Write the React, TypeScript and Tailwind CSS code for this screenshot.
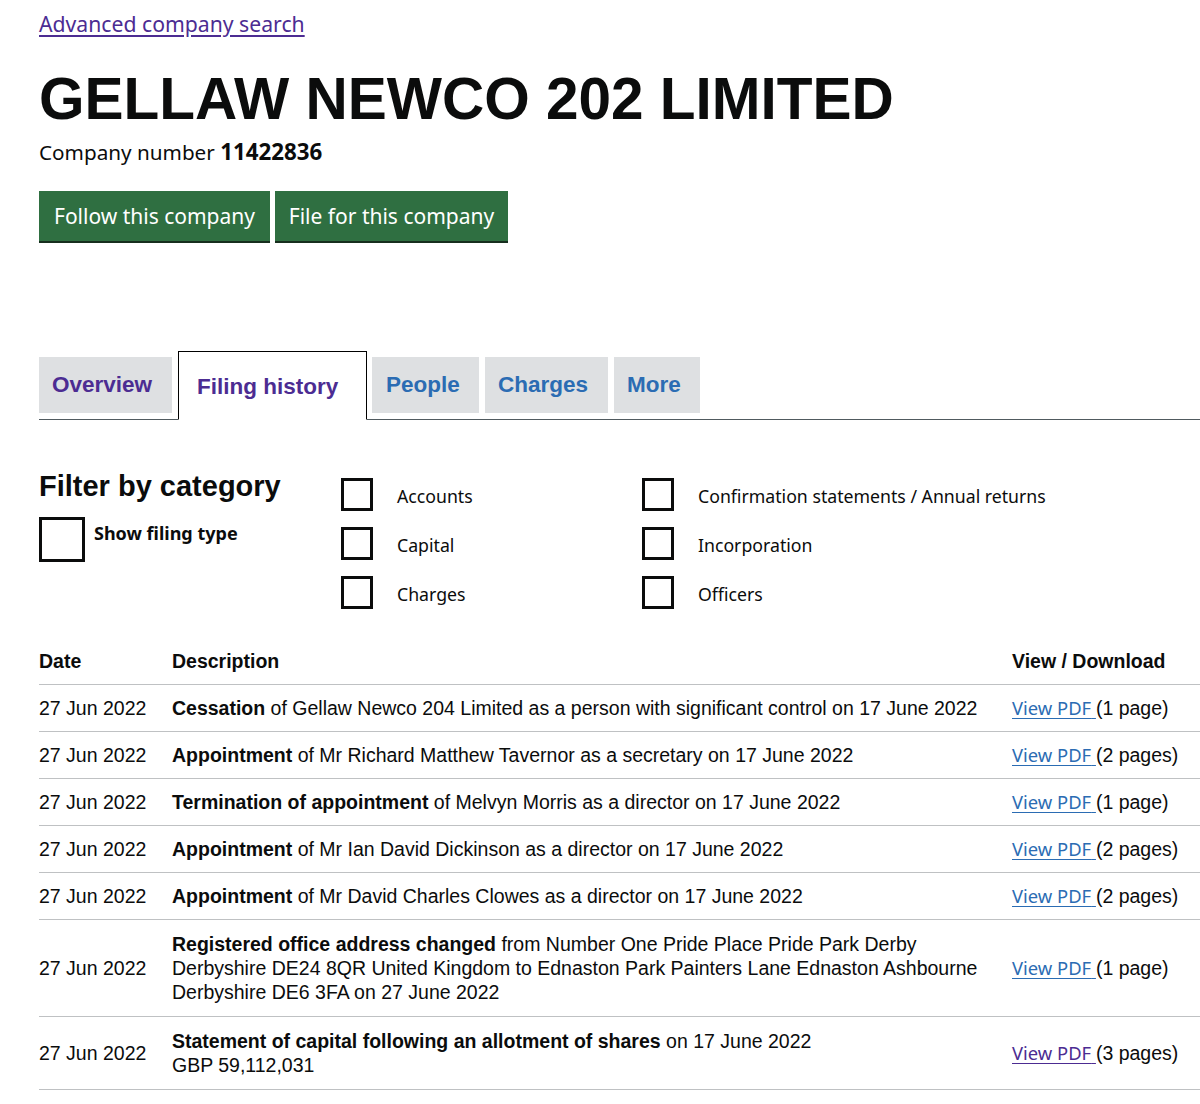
import React from "react";

const T = { fontFamily: '"Noto Sans", "Liberation Sans", sans-serif' };
const A = { fontFamily: '"Liberation Sans", Arial, sans-serif' };

type Row = {
  desc: React.ReactNode;
  pages: string;
  visited?: boolean;
};

const rows: Row[] = [
  {
    desc: (
      <>
        <b>Cessation</b> of Gellaw Newco 204 Limited as a person with significant control on 17 June 2022
      </>
    ),
    pages: "(1 page)",
  },
  {
    desc: (
      <>
        <b>Appointment</b> of Mr Richard Matthew Tavernor as a secretary on 17 June 2022
      </>
    ),
    pages: "(2 pages)",
  },
  {
    desc: (
      <>
        <b>Termination of appointment</b> of Melvyn Morris as a director on 17 June 2022
      </>
    ),
    pages: "(1 page)",
  },
  {
    desc: (
      <>
        <b>Appointment</b> of Mr Ian David Dickinson as a director on 17 June 2022
      </>
    ),
    pages: "(2 pages)",
  },
  {
    desc: (
      <>
        <b>Appointment</b> of Mr David Charles Clowes as a director on 17 June 2022
      </>
    ),
    pages: "(2 pages)",
  },
  {
    desc: (
      <>
        <b>Registered office address changed</b> from Number One Pride Place Pride Park Derby
        <br />
        Derbyshire DE24 8QR United Kingdom to Ednaston Park Painters Lane Ednaston Ashbourne
        <br />
        Derbyshire DE6 3FA on 27 June 2022
      </>
    ),
    pages: "(1 page)",
  },
  {
    desc: (
      <>
        <b>Statement of capital following an allotment of shares</b> on 17 June 2022
        <br />
        GBP 59,112,031
      </>
    ),
    pages: "(3 pages)",
    visited: true,
  },
];

function Box({ big }: { big?: boolean }) {
  return big ? (
    <div className="w-[46px] h-[45px] border-[3px] border-[#0b0c0c] bg-white shrink-0" />
  ) : (
    <div className="w-[32px] h-[33px] border-[3px] border-[#0b0c0c] bg-white shrink-0" />
  );
}

function Check({ label }: { label: string }) {
  return (
    <div className="flex items-center h-[33px]">
      <Box />
      <span className="ml-[24px] text-[17.7px] leading-[24px] text-[#0b0c0c] pt-[3px]" style={T}>
        {label}
      </span>
    </div>
  );
}

export default function App() {
  return (
    <div className="w-[1200px] h-[1104px] overflow-hidden bg-white text-[#0b0c0c] pl-[39px]">
      <div className="pt-[9px]">
        <a href="#" className="text-[21.2px] leading-[30px] text-[#4c2c92] underline underline-offset-[3px]" style={T}>
          Advanced company search
        </a>
      </div>

      <h1 className="mt-[31px] text-[58.5px] leading-[58px] font-bold" style={A}>
        GELLAW NEWCO 202 LIMITED
      </h1>

      <p className="mt-[10px] text-[20.7px] leading-[28px]" style={T}>
        Company number <b className="font-bold text-[22.3px]">11422836</b>
      </p>

      <div className="mt-[25px] flex gap-[5px]">
        <button
          className="w-[231px] h-[50px] bg-[#2f6f41] text-white text-[21px] leading-[24px] shadow-[0_2px_0_#172e1e]"
          style={T}
        >
          Follow this company
        </button>
        <button
          className="w-[233px] h-[50px] bg-[#2f6f41] text-white text-[21px] leading-[24px] shadow-[0_2px_0_#172e1e]"
          style={T}
        >
          File for this company
        </button>
      </div>

      <div className="mt-[110px] flex items-end border-b border-[#505a5f]" style={A}>
        <div className="w-[133px] h-[56px] mb-[6px] bg-[#dee0e2] flex items-center pl-[13px] text-[22.5px] font-bold text-[#4c2c92]">
          Overview
        </div>
        <div className="ml-[6px] w-[189px] h-[69px] -mb-px bg-white border border-black border-b-white flex items-center pl-[18px] pt-[2px] text-[22.5px] font-bold text-[#4c2c92]">
          Filing history
        </div>
        <div className="ml-[5px] w-[107px] h-[56px] mb-[6px] bg-[#dee0e2] flex items-center pl-[14px] text-[22.5px] font-bold text-[#2b6cb3]">
          People
        </div>
        <div className="ml-[6px] w-[123px] h-[56px] mb-[6px] bg-[#dee0e2] flex items-center pl-[13px] text-[22.5px] font-bold text-[#2b6cb3]">
          Charges
        </div>
        <div className="ml-[6px] w-[86px] h-[56px] mb-[6px] bg-[#dee0e2] flex items-center pl-[13px] text-[22.5px] font-bold text-[#2b6cb3]">
          More
        </div>
      </div>

      <div className="mt-[50px] flex">
        <div className="w-[302px]">
          <h2 className="text-[29px] leading-[32px] font-bold" style={A}>
            Filter by category
          </h2>
          <div className="mt-[15px] flex items-start">
            <Box big />
            <span className="ml-[9px] mt-[4px] text-[18px] leading-[24px] font-bold" style={T}>
              Show filing type
            </span>
          </div>
        </div>
        <div className="w-[301px] mt-[8px] flex flex-col gap-[16px]">
          <Check label="Accounts" />
          <Check label="Capital" />
          <Check label="Charges" />
        </div>
        <div className="mt-[8px] flex flex-col gap-[16px]">
          <Check label="Confirmation statements / Annual returns" />
          <Check label="Incorporation" />
          <Check label="Officers" />
        </div>
      </div>

      <table className="mt-[28px] w-[1200px] border-collapse text-[19.5px] leading-[24px]" style={A}>
        <thead>
          <tr className="border-b border-[#bfc1c3]">
            <th className="w-[133px] text-left font-bold py-[11px] pt-[12px]">Date</th>
            <th className="w-[840px] text-left font-bold py-[11px] pt-[12px]">Description</th>
            <th className="text-left font-bold py-[11px] pt-[12px]">View / Download</th>
          </tr>
        </thead>
        <tbody>
          {rows.map((r, i) => (
            <tr key={i} className="border-b border-[#bfc1c3]">
              <td className="py-[11px] align-middle whitespace-nowrap">27 Jun 2022</td>
              <td className={"align-middle " + (i >= 5 ? "py-[12px]" : "py-[11px]")}>{r.desc}</td>
              <td className="py-[11px] align-middle whitespace-nowrap">
                <a
                  href="#"
                  className={
                    "underline underline-offset-[3px] text-[18.4px] " +
                    (r.visited ? "text-[#4c2c92]" : "text-[#2b6cb3]")
                  }
                  style={T}
                >
                  View PDF{" "}
                </a>
                {r.pages}
              </td>
            </tr>
          ))}
        </tbody>
      </table>
    </div>
  );
}
